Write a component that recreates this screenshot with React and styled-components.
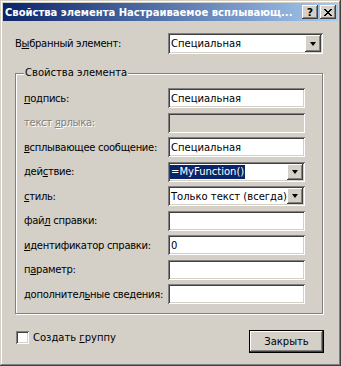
import React from 'react'
import styled, { createGlobalStyle } from 'styled-components'

const FACE = '#d4d0c8'
const SHADOW = '#808080'
const DARK = '#404040'
const NAVY = '#0a246a'
const UI_FONT = '"DejaVu Sans", Verdana, sans-serif'

const GlobalStyle = createGlobalStyle`
  html, body {
    margin: 0;
    padding: 0;
    background: ${FACE};
  }
`

const raised = `
  box-shadow:
    inset -1px -1px ${DARK},
    inset 1px 1px #fff,
    inset -2px -2px ${SHADOW},
    inset 2px 2px ${FACE};
`

const sunken = `
  box-shadow:
    inset 1px 1px ${SHADOW},
    inset -1px -1px #fff,
    inset 2px 2px ${DARK},
    inset -2px -2px ${FACE};
`

const Window = styled.div`
  box-sizing: border-box;
  width: 341px;
  height: 366px;
  padding: 3px;
  background: ${FACE};
  font-family: ${UI_FONT};
  font-size: 10px;
  color: #000;
  display: flex;
  flex-direction: column;
  box-shadow:
    inset -1px -1px ${DARK},
    inset 1px 1px ${FACE},
    inset -2px -2px ${SHADOW},
    inset 2px 2px #fff;
`

const TitleBar = styled.div`
  height: 18px;
  display: flex;
  align-items: center;
  padding: 0 2px 0 2px;
  background: linear-gradient(to right, ${NAVY}, #a6caf0);
`

const Title = styled.div`
  flex: 1;
  color: #fff;
  font-weight: bold;
  font-size: 10px;
  white-space: nowrap;
  overflow: hidden;
`

const CaptionButton = styled.div`
  box-sizing: border-box;
  width: 16px;
  height: 14px;
  margin-left: ${p => p.$gap || 0}px;
  background: ${FACE};
  display: flex;
  align-items: center;
  justify-content: center;
  font-weight: bold;
  font-size: 11px;
  line-height: 1;
  ${raised}
`

const Body = styled.div`
  flex: 1;
  display: flex;
  flex-direction: column;
  padding: 12px 14px 0 12px;
`

const TopRow = styled.div`
  display: grid;
  grid-template-columns: 153px 155px;
  align-items: center;
  height: 21px;
`

const Label = styled.span`
  white-space: nowrap;
  letter-spacing: -0.3px;
  color: ${p => (p.$disabled ? SHADOW : '#000')};
  text-shadow: ${p => (p.$disabled ? '1px 1px #fff' : 'none')};
`

const Key = styled.u`
  text-decoration-thickness: 1px;
  text-underline-offset: 1px;
`

const Group = styled.fieldset`
  margin: 12px 0 0 0;
  padding: 8px 0 6px 8px;
  border: 1px solid ${SHADOW};
  box-shadow: inset 1px 1px #fff, 1px 1px #fff;
  height: 248px;
  box-sizing: border-box;
  width: 308px;
`

const Legend = styled.legend`
  padding: 0 1px;
  margin-left: 0;
  line-height: 14px;
  background: ${FACE};
`

const Rows = styled.div`
  display: grid;
  grid-template-columns: 144px 137px;
  grid-auto-rows: 20px;
  row-gap: 4.5px;
  align-items: center;
`

const Field = styled.div`
  box-sizing: border-box;
  height: 20px;
  width: ${p => p.$width || 137}px;
  padding: 0 3px;
  display: flex;
  align-items: center;
  background: ${p => (p.$disabled ? FACE : '#fff')};
  white-space: nowrap;
  ${sunken}
`

const ComboBox = styled(Field)`
  height: ${p => p.$height || 20}px;
  padding: 0 2px 0 3px;
`

const ComboText = styled.span`
  flex: 1;
  display: flex;
`

const Selected = styled.span`
  background: ${NAVY};
  color: #fff;
  padding: 0 1px;
  margin-left: -1px;
  line-height: 14px;
`

const DropButton = styled.div`
  box-sizing: border-box;
  width: 16px;
  height: ${p => p.$height || 16}px;
  background: ${FACE};
  display: flex;
  align-items: center;
  justify-content: center;
  ${raised}

  &::after {
    content: '';
    border-left: 3.5px solid transparent;
    border-right: 3.5px solid transparent;
    border-top: 4px solid #000;
  }
`

const Footer = styled.div`
  display: flex;
  align-items: flex-start;
  justify-content: space-between;
  margin-top: 16px;
  padding-left: 1px;
`

const CheckRow = styled.label`
  display: flex;
  align-items: center;
  gap: 4px;
  margin-top: 1px;
`

const CheckBox = styled.span`
  box-sizing: border-box;
  width: 13px;
  height: 13px;
  background: #fff;
  ${sunken}
`

const DefaultButton = styled.div`
  box-sizing: border-box;
  width: 75px;
  height: 23px;
  border: 1px solid #000;
  background: ${FACE};
  display: flex;
  align-items: center;
  justify-content: center;
  ${raised}
`

const CloseGlyph = () => (
  <svg width="8" height="7" viewBox="0 0 8 7" shapeRendering="crispEdges">
    <path d="M0 0h2v1h-2zM6 0h2v1h-2zM1 1h2v1h-2zM5 1h2v1h-2zM2 2h4v1h-4zM3 3h2v1h-2zM2 4h4v1h-4zM1 5h2v1h-2zM5 5h2v1h-2zM0 6h2v1h-2zM6 6h2v1h-2z" fill="#000" />
  </svg>
)

const rows = [
  { label: <><Key>п</Key>одпись:</>, value: 'Специальная' },
  { label: <>текст <Key>я</Key>рлыка:</>, disabled: true },
  { label: <><Key>в</Key>сплывающее сообщение:</>, value: 'Специальная' },
  { label: <>дей<Key>с</Key>твие:</>, combo: true, selected: '=MyFunction()' },
  { label: <><Key>с</Key>тиль:</>, combo: true, value: 'Только текст (всегда)' },
  { label: <>фай<Key>л</Key> справки:</> },
  { label: <><Key>и</Key>дентификатор справки:</>, value: '0' },
  { label: <>п<Key>а</Key>раметр:</> },
  { label: <>дополнител<Key>ь</Key>ные сведения:</> },
]

export default function App() {
  return (
    <>
      <GlobalStyle />
      <Window>
        <TitleBar>
          <Title>Свойства элемента Настраиваемое всплывающ...</Title>
          <CaptionButton>?</CaptionButton>
          <CaptionButton $gap={2}><CloseGlyph /></CaptionButton>
        </TitleBar>
        <Body>
          <TopRow>
            <Label>В<Key>ы</Key>бранный элемент:</Label>
            <ComboBox $width={155} $height={21}>
              <ComboText>Специальная</ComboText>
              <DropButton $height={17} />
            </ComboBox>
          </TopRow>
          <Group>
            <Legend>Свойства элемента</Legend>
            <Rows>
              {rows.map((row, i) => (
                <React.Fragment key={i}>
                  <Label $disabled={row.disabled}>{row.label}</Label>
                  {row.combo ? (
                    <ComboBox>
                      <ComboText>
                        {row.selected ? <Selected>{row.selected}</Selected> : row.value}
                      </ComboText>
                      <DropButton />
                    </ComboBox>
                  ) : (
                    <Field $disabled={row.disabled}>{row.value}</Field>
                  )}
                </React.Fragment>
              ))}
            </Rows>
          </Group>
          <Footer>
            <CheckRow>
              <CheckBox />
              <span>Создать <Key>г</Key>руппу</span>
            </CheckRow>
            <DefaultButton>Закрыть</DefaultButton>
          </Footer>
        </Body>
      </Window>
    </>
  )
}
